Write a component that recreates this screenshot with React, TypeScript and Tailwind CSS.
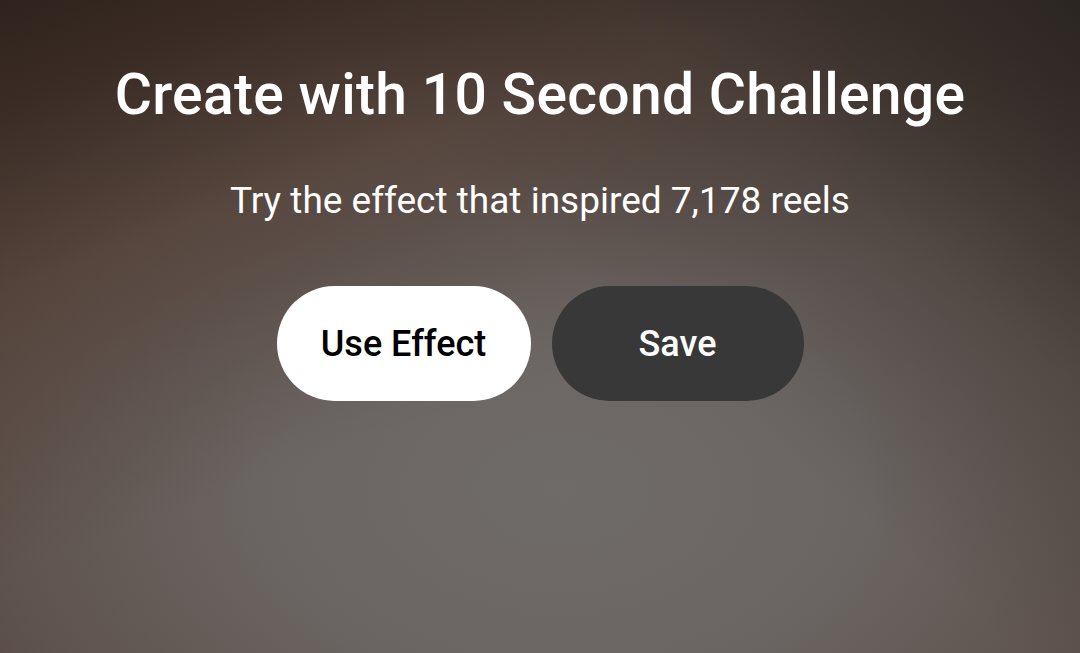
export default function App() {
  return (
    <div
      className="relative h-[653px] w-[1080px] overflow-hidden bg-[#6a6563]"
      style={{ fontFamily: 'Roboto, "Noto Sans", sans-serif' }}
    >
      {/* blurred camera backdrop */}
      <div className="absolute inset-0 bg-[radial-gradient(ellipse_75%_80%_at_52%_75%,#6f6b69_0%,#6b6664_35%,#5f534d_70%,#4d3e37_100%)]" />
      <div className="absolute inset-0 bg-[linear-gradient(160deg,rgba(42,30,24,0.85)_0%,rgba(78,58,48,0.5)_28%,rgba(0,0,0,0)_55%)]" />
      <div className="absolute inset-0 bg-[linear-gradient(220deg,rgba(35,32,30,0.8)_0%,rgba(50,45,42,0.3)_25%,rgba(0,0,0,0)_45%)]" />

      <div className="relative flex flex-col items-center">
        <h1 className="mt-[57px] text-[57px] font-medium leading-[76px] tracking-[0.3px] text-white">
          Create with 10 Second Challenge
        </h1>
        <p className="mt-[45px] text-[37px] leading-[46px] text-white">
          Try the effect that inspired 7,178 reels
        </p>
        <div className="mt-[62px] flex gap-[21px]">
          <button className="h-[115px] w-[254px] rounded-full bg-white text-[36px] font-medium text-black">
            Use Effect
          </button>
          <button className="h-[115px] w-[252px] rounded-full bg-[#383838] text-[36px] font-medium text-white">
            Save
          </button>
        </div>
      </div>
    </div>
  );
}
